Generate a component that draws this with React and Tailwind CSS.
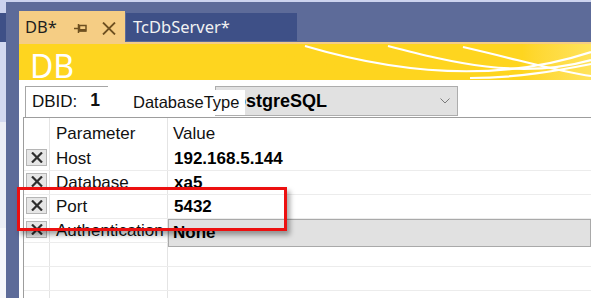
const rows = [
  { name: "Host", value: "192.168.5.144" },
  { name: "Database", value: "xa5" },
  { name: "Port", value: "5432" },
  { name: "Authentication", value: "None", combo: true },
  {},
  {},
  {},
];

const RemoveButton = () => (
  <div className="ml-[2px] mt-[2px] w-[21px] h-[17px] bg-[#e6e6e6] border border-[#b5b5b5] flex items-center justify-center">
    <svg width="12" height="11" viewBox="0 0 12 11">
      <path d="M1 0.5 L11 10.5 M11 0.5 L1 10.5" stroke="#2e2e2e" strokeWidth="2.2" />
    </svg>
  </div>
);

export default function App() {
  return (
    <div className="relative w-[591px] h-[298px] overflow-hidden bg-[#5d6b99] flex flex-col font-['Liberation_Sans',Arial,sans-serif]">
      <div className="h-[2px] shrink-0 bg-[#ccd3ee]" />
      <div className="flex flex-1 min-h-0">
        {/* left dock strip */}
        <div className="w-[6px] shrink-0 flex flex-col">
          <div className="h-[11px] bg-[#ccd3ee]" />
          <div className="h-[29px] bg-[#3e5087]" />
          <div className="h-[80px] bg-[#d3d9f0]" />
          <div className="h-[106px] bg-[#eceef6]" />
          <div className="flex-1 bg-[#f6f7fb]" />
        </div>
        <div className="w-[13px] shrink-0" />

        <main className="flex-1 min-w-0 flex flex-col">
          {/* tabs */}
          <div className="h-[40px] shrink-0 flex items-start font-['Noto_Sans',sans-serif] text-[16.5px]">
            <div className="mt-[9px] h-[31px] w-[106px] bg-[#f5cd84] flex items-center pl-[6px] text-[#1e1e1e]">
              <span className="leading-none pt-[2px]">DB*</span>
              <svg className="ml-[17px] mt-[4px]" width="13" height="9" viewBox="0 0 13 9">
                <path d="M0 4.5 H4" stroke="#6e5020" strokeWidth="1.5" />
                <path d="M4.5 0 V9" stroke="#6e5020" strokeWidth="1.5" />
                <rect x="5.5" y="1.5" width="6.5" height="5.5" fill="none" stroke="#6e5020" strokeWidth="1.5" />
                <rect x="5.5" y="5" width="6.5" height="2.5" fill="#6e5020" />
              </svg>
              <svg className="ml-[15px] mt-[3px]" width="14" height="13" viewBox="0 0 14 13">
                <path d="M1 0.5 L13 12.5 M13 0.5 L1 12.5" stroke="#6e5020" strokeWidth="1.8" />
              </svg>
            </div>
            <div className="ml-[1px] mt-[11px] h-[28px] w-[171px] bg-[#3e5087] flex items-center pl-[7px] text-[#f2f2f2]">
              <span className="leading-none pt-[1px]">TcDbServer*</span>
            </div>
          </div>

          <div className="h-[2px] shrink-0 bg-[#f5cd84]" />

          {/* banner */}
          <div className="relative h-[36px] shrink-0 bg-linear-to-r from-[#fed51f] from-88% to-[#ffe35a] overflow-hidden">
            <svg className="absolute inset-0" width="572" height="36" viewBox="0 0 572 36">
              <g fill="none" stroke="#ffffff" strokeWidth="2.2">
                <path d="M286 2 C381 30 481 38 572 8" />
                <path d="M369 2 C431 18 501 36 572 16" />
                <path d="M444 3 C501 16 541 28 572 32" />
                <path d="M451 34 C501 34 541 26 572 20" />
              </g>
            </svg>
            <div className="relative pl-[11px] pt-[8px] text-[32px] leading-[28px] text-white font-['Noto_Sans',sans-serif]">DB</div>
          </div>

          {/* content */}
          <div className="flex-1 min-h-0 bg-white flex flex-col">
            <div className="h-[37px] shrink-0 flex items-start text-[#111]">
              <div className="ml-[6px] mt-[6px] w-[83px] h-[31px] border-t border-l border-[#a6a6a6] flex items-start pl-[6px]">
                <span className="pt-[3px] text-[17px] leading-[24px]">DBID:</span>
                <span className="ml-[13px] pt-[1px] text-[17.5px] leading-[24px] font-bold">1</span>
              </div>
              <div className="relative z-10 ml-[25px] mt-[10px] h-[25px] w-[112px] bg-white text-[16.5px] leading-[25px]">
                DatabaseType
              </div>
              <div className="-ml-[30px] mt-[6px] h-[30px] w-[243px] bg-[#e1e1e1] border border-[#adadad] flex items-center justify-between pl-[7px] pr-[7px]">
                <span className="text-[18px] leading-[28px] font-bold text-black">PostgreSQL</span>
                <svg width="10" height="6" viewBox="0 0 10 6">
                  <path d="M0.5 0.5 L5 5 L9.5 0.5" fill="none" stroke="#7a7a7a" strokeWidth="1" />
                </svg>
              </div>
            </div>

            {/* property grid */}
            <div className="ml-[4px] flex-1 border-t border-l border-[#9d9d9d] text-[17px] text-[#111]">
              <div className="h-[29px] flex">
                <div className="w-[26px] shrink-0 border-r border-[#e4e4e4]" />
                <div className="w-[118px] shrink-0 border-r border-[#e4e4e4] pl-[6px] pt-[4px] leading-[24px]">Parameter</div>
                <div className="flex-1 pl-[5px] pt-[4px] leading-[24px]">Value</div>
              </div>
              {rows.map((r, i) => (
                <div key={i} className="h-[24px] flex border-b border-[#ececec]">
                  <div className="w-[26px] shrink-0 border-r border-[#e4e4e4]">
                    {r.name && <RemoveButton />}
                  </div>
                  <div className="w-[118px] shrink-0 border-r border-[#e4e4e4] pl-[6px] leading-[24px] whitespace-nowrap overflow-hidden">
                    {r.name}
                  </div>
                  <div className="relative flex-1 leading-[24px]">
                    {r.combo ? (
                      <div className="absolute z-10 left-0 right-0 top-0 h-[28px] bg-[#e1e1e1] border border-[#a9a9a9] pl-[4px] leading-[26px] font-bold text-black">
                        {r.value}
                      </div>
                    ) : (
                      <span className="pl-[6px] font-bold text-black">{r.value}</span>
                    )}
                  </div>
                </div>
              ))}
            </div>
          </div>
        </main>
      </div>

      {/* annotation */}
      <div className="absolute z-20 left-[17px] top-[187px] w-[270px] h-[44px] border-[3px] border-[#ec1010] shadow-[3px_4px_5px_rgba(0,0,0,0.35)]" />
    </div>
  );
}
